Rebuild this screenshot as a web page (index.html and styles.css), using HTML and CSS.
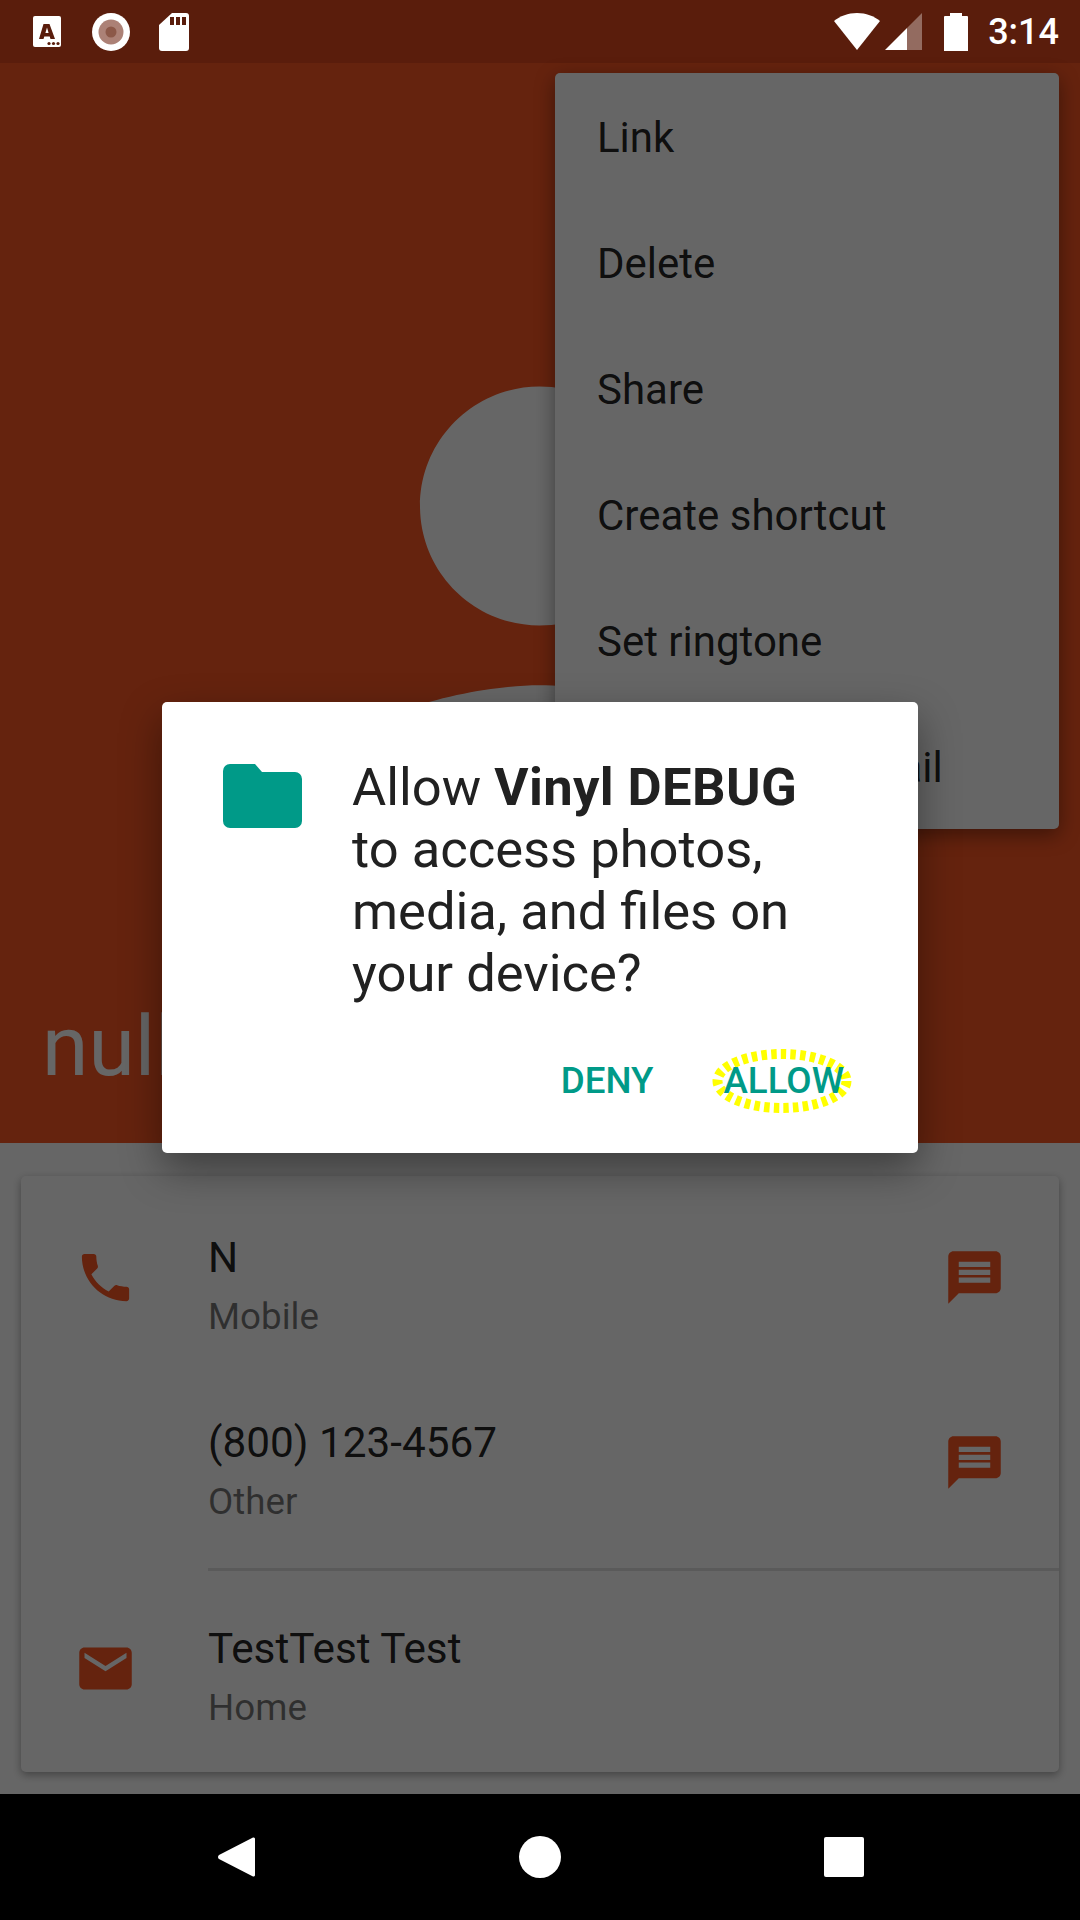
FILE: index.html
```html
<!DOCTYPE html>
<html lang="en">
<head>
    <meta charset="UTF-8">
    <meta name="viewport" content="width=device-width, initial-scale=1.0">
    <title>Vinyl permission dialog</title>
    <link rel="stylesheet" href="styles.css">
</head>
<body>
    <div class="phone">
        <div class="status-bar">
            <div class="status-left">
                <svg class="icon-a" viewBox="0 0 28 31"><rect width="28" height="31" rx="2" fill="#fff"/><path fill="#5a1d0c" d="M10.500 8h6L22 23h-4.500l-.8-2.500h-5.400L10.500 23H6zM12.400 17h3.200L14 11.500z"/><circle cx="16" cy="27.500" r="1.600" fill="#5a1d0c"/><circle cx="20.500" cy="27.500" r="1.600" fill="#5a1d0c"/><circle cx="25" cy="27.500" r="1.600" fill="#5a1d0c"/></svg>
                <svg class="icon-rec" viewBox="0 0 38 38"><circle cx="19" cy="19" r="19" fill="#fff"/><circle cx="19" cy="19" r="12.500" fill="#ac8176"/><circle cx="19" cy="19" r="5.500" fill="#8c5848"/></svg>
                <svg class="icon-sd" viewBox="0 0 30 38"><path fill="#fff" d="M13 0h14a3 3 0 0 1 3 3v32a3 3 0 0 1-3 3H3a3 3 0 0 1-3-3V12z"/><path fill="#5a1d0c" d="M11 4h4v8h-4zM17 4h4v8h-4zM23 4h4v8h-4z"/></svg>
            </div>
            <div class="status-right">
                <svg class="icon-wifi" viewBox="0 0 46 37"><path fill="#fff" d="M23 37L0 8C6 3 14 0 23 0s17 3 23 8z"/></svg>
                <svg class="icon-signal" viewBox="0 0 37 37"><path fill="#fff" fill-opacity=".35" d="M37 0v37H22V15z"/><path fill="#fff" d="M22 15v22H0z"/></svg>
                <svg class="icon-battery" viewBox="0 0 24 38"><path fill="#fff" d="M6 0h12v3h5a1 1 0 0 1 1 1v34H0V4a1 1 0 0 1 1-1h5z"/></svg>
                <span class="clock">3:14</span>
            </div>
        </div>

        <div class="screen">
            <header class="contact-header">
                <svg class="avatar" viewBox="0 0 24 24"><path fill="#fff" d="M12 12c2.210 0 4-1.790 4-4s-1.790-4-4-4-4 1.790-4 4 1.790 4 4 4zm0 2c-2.670 0-8 1.340-8 4v2h16v-2c0-2.660-5.330-4-8-4z"/></svg>
                <div class="contact-name">null</div>
            </header>

            <div class="details">
                <div class="card">
                    <div class="row">
                        <svg class="row-icon" viewBox="0 0 24 24"><path d="M6.620 10.790c1.440 2.830 3.760 5.140 6.590 6.590l2.200-2.200c.270-.270.670-.360 1.020-.240 1.120.370 2.330.570 3.570.570.550 0 1 .450 1 1V20c0 .550-.450 1-1 1-9.390 0-17-7.610-17-17 0-.550.450-1 1-1h3.500c.550 0 1 .450 1 1 0 1.250.200 2.450.570 3.570.110.350.030.740-.250 1.020l-2.200 2.200z"/></svg>
                        <div class="row-text">
                            <div class="row-title">N</div>
                            <div class="row-sub">Mobile</div>
                        </div>
                        <svg class="row-action" viewBox="0 0 24 24"><path d="M20 2H4c-1.100 0-1.990.900-1.990 2L2 22l4-4h14c1.100 0 2-.900 2-2V4c0-1.100-.900-2-2-2zm-2 12H6v-2h12v2zm0-3H6V9h12v2zm0-3H6V6h12v2z"/></svg>
                    </div>
                    <div class="row">
                        <div class="row-spacer"></div>
                        <div class="row-text">
                            <div class="row-title">(800) 123-4567</div>
                            <div class="row-sub">Other</div>
                        </div>
                        <svg class="row-action" viewBox="0 0 24 24"><path d="M20 2H4c-1.100 0-1.990.900-1.990 2L2 22l4-4h14c1.100 0 2-.900 2-2V4c0-1.100-.900-2-2-2zm-2 12H6v-2h12v2zm0-3H6V9h12v2zm0-3H6V6h12v2z"/></svg>
                    </div>
                    <div class="divider"></div>
                    <div class="row">
                        <svg class="row-icon" viewBox="0 0 24 24"><path d="M20 4H4c-1.100 0-1.990.900-1.990 2L2 18c0 1.100.900 2 2 2h16c1.100 0 2-.900 2-2V6c0-1.100-.900-2-2-2zm0 4l-8 5-8-5V6l8 5 8-5v2z"/></svg>
                        <div class="row-text">
                            <div class="row-title">TestTest Test</div>
                            <div class="row-sub">Home</div>
                        </div>
                    </div>
                </div>
            </div>

            <ul class="menu">
                <li>Link</li>
                <li>Delete</li>
                <li>Share</li>
                <li>Create shortcut</li>
                <li>Set ringtone</li>
                <li>Route to voicemail</li>
            </ul>

            <div class="scrim"></div>

            <div class="dialog">
                <div class="dialog-body">
                    <svg class="dialog-icon" viewBox="0 0 79 64"><path fill="#009a88" d="M7 0h25l7 8h33a7 7 0 0 1 7 7v42a7 7 0 0 1-7 7H7a7 7 0 0 1-7-7V7a7 7 0 0 1 7-7z"/></svg>
                    <p class="dialog-text">Allow <b>Vinyl DEBUG</b> to access photos, media, and files on your device?</p>
                </div>
                <div class="dialog-actions">
                    <button class="dialog-btn" type="button">DENY</button>
                    <button class="dialog-btn allow" type="button">
                        <svg class="highlight" viewBox="0 0 140 66"><ellipse cx="70" cy="33" rx="64.500" ry="27" fill="none" stroke="#ffff00" stroke-width="10" stroke-dasharray="5.500 4.200"/></svg>
                        <span>ALLOW</span>
                    </button>
                </div>
            </div>
        </div>

        <div class="nav-bar">
            <svg class="nav-back" viewBox="0 0 38 42"><path fill="#fff" d="M36 1.500L2 19a2.500 2.500 0 0 0 0 4l34 17.500a1.500 1.500 0 0 0 2-1.500V3a1.500 1.500 0 0 0-2-1.500z"/></svg>
            <svg class="nav-home" viewBox="0 0 42 42"><circle cx="21" cy="21" r="21" fill="#fff"/></svg>
            <svg class="nav-recent" viewBox="0 0 40 40"><rect width="40" height="40" rx="2" fill="#fff"/></svg>
        </div>
    </div>
</body>
</html>
```

FILE: styles.css
```css
* {
    margin: 0;
    padding: 0;
    box-sizing: border-box;
}

body {
    font-family: Roboto, sans-serif;
    background: #000000;
}

.phone {
    width: 1080px;
    height: 1920px;
    display: flex;
    flex-direction: column;
    overflow: hidden;
}

.status-bar {
    height: 63px;
    background: #5a1d0c;
    display: flex;
    justify-content: space-between;
    align-items: center;
    flex-shrink: 0;
}

.status-left {
    display: flex;
    align-items: center;
    padding-left: 33px;
}

.icon-a {
    width: 28px;
    height: 31px;
    margin-right: 31px;
}

.icon-rec {
    width: 38px;
    height: 38px;
    margin-right: 29px;
}

.icon-sd {
    width: 30px;
    height: 38px;
}

.status-right {
    display: flex;
    align-items: center;
    padding-right: 21px;
}

.icon-wifi {
    width: 46px;
    height: 37px;
    margin-right: 5px;
}

.icon-signal {
    width: 37px;
    height: 37px;
    margin-right: 22px;
}

.icon-battery {
    width: 24px;
    height: 38px;
    margin-right: 20px;
}

.clock {
    color: #ffffff;
    font-size: 36px;
    font-weight: 500;
}

.screen {
    position: relative;
    flex: 1;
    display: flex;
    flex-direction: column;
    background: #ffffff;
}

.contact-header {
    position: relative;
    height: 1080px;
    background: #fc5723;
    overflow: hidden;
    flex-shrink: 0;
}

.avatar {
    position: absolute;
    left: 181px;
    top: 204px;
    width: 717px;
    height: 717px;
}

.contact-name {
    position: absolute;
    left: 42px;
    bottom: 46px;
    color: #ffffff;
    font-size: 84px;
    line-height: 100px;
}

.details {
    flex: 1;
    padding: 33px 21px 0;
}

.card {
    background: #ffffff;
    border-radius: 5px;
    box-shadow: 0 3px 8px rgba(0, 0, 0, .35);
    height: 596px;
    padding-top: 21px;
}

.row {
    display: flex;
    align-items: flex-start;
    height: 185px;
}

.row-icon {
    width: 63px;
    height: 63px;
    margin: 49px 0 0 53px;
    fill: #fc5723;
    flex-shrink: 0;
}

.row-spacer {
    width: 116px;
    flex-shrink: 0;
}

.row-text {
    margin-left: 71px;
    flex: 1;
    padding-top: 31px;
}

.row-title {
    font-size: 42.300px;
    line-height: 59px;
    color: rgba(0, 0, 0, .87);
}

.row-sub {
    font-size: 36.750px;
    line-height: 59px;
    color: rgba(0, 0, 0, .54);
}

.row-action {
    width: 63px;
    height: 63px;
    margin: 49px 53px 0 0;
    fill: #fc5723;
    flex-shrink: 0;
}

.divider {
    height: 3px;
    margin: 1px 0 17px 187px;
    background: rgba(0, 0, 0, .12);
}

.menu {
    position: absolute;
    left: 555px;
    top: 10px;
    width: 504px;
    height: 756px;
    list-style: none;
    background: #ffffff;
    border-radius: 5px;
    box-shadow: 0 6px 20px rgba(0, 0, 0, .4);
}

.menu li {
    height: 126px;
    line-height: 129px;
    padding-left: 42px;
    font-size: 42px;
    color: rgba(0, 0, 0, .87);
}

.scrim {
    position: absolute;
    inset: 0;
    background: rgba(0, 0, 0, .6);
}

.dialog {
    position: absolute;
    left: 162px;
    top: 639px;
    width: 756px;
    height: 451px;
    background: #ffffff;
    border-radius: 5px;
    box-shadow: 0 16px 40px rgba(0, 0, 0, .4);
}

.dialog-body {
    display: flex;
    padding: 62px 75px 0 61px;
}

.dialog-icon {
    width: 79px;
    height: 64px;
    flex-shrink: 0;
    margin-right: 50px;
}

.dialog-text {
    font-size: 52.500px;
    line-height: 62px;
    color: #212121;
    margin-top: -8px;
}

.dialog-text b {
    letter-spacing: .4px;
}

.dialog-actions {
    display: flex;
    justify-content: flex-end;
    gap: 70px;
    margin-top: 44px;
    padding-right: 74px;
}

.dialog-btn {
    position: relative;
    border: none;
    background: none;
    font-family: Roboto, sans-serif;
    font-size: 36.750px;
    font-weight: 500;
    line-height: 66px;
    color: #009a88;
}

.highlight {
    position: absolute;
    left: -11px;
    top: 0;
    width: 140px;
    height: 66px;
}

.allow span {
    position: relative;
}

.nav-bar {
    height: 126px;
    background: #000000;
    display: flex;
    align-items: center;
    flex-shrink: 0;
    padding-left: 217px;
}

.nav-back {
    width: 38px;
    height: 42px;
    margin-right: 264px;
}

.nav-home {
    width: 42px;
    height: 42px;
    margin-right: 263px;
}

.nav-recent {
    width: 40px;
    height: 40px;
}
```
